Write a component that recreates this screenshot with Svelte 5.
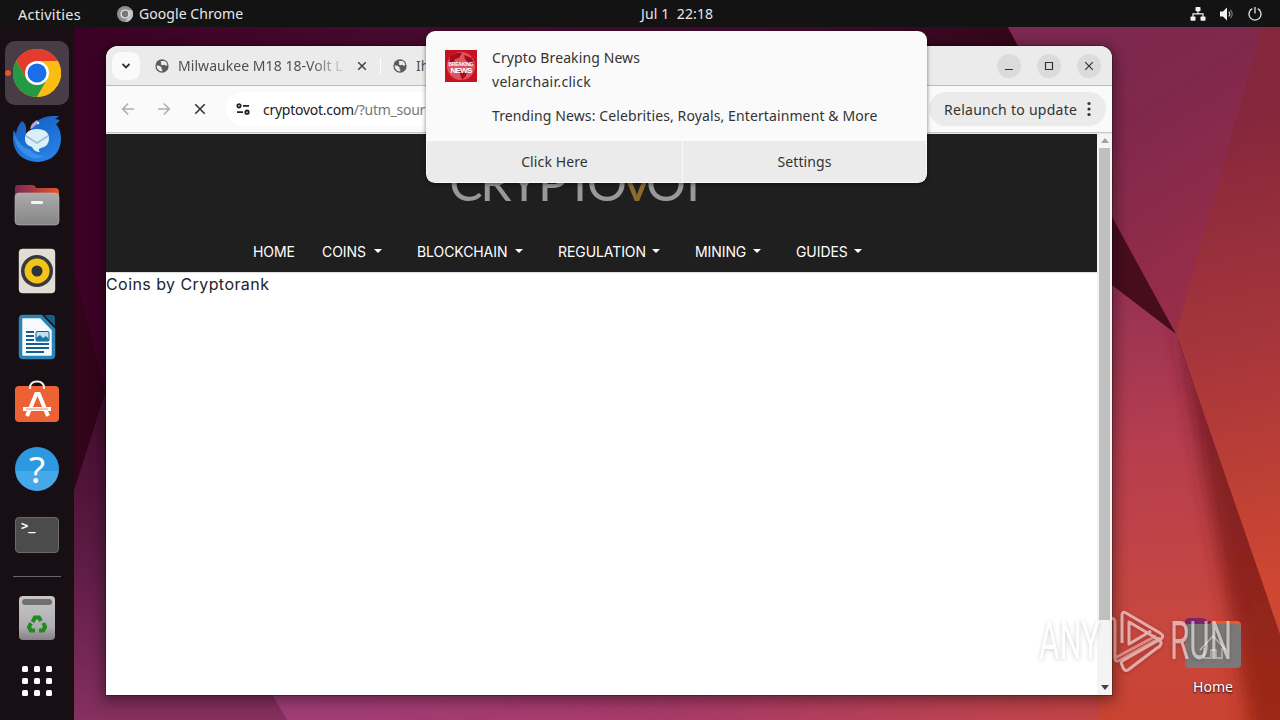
<script lang="ts">
  type NavItem = { label: string; width: number; menu: boolean };

  const navItems: NavItem[] = [
    { label: 'HOME', width: 42, menu: false },
    { label: 'COINS', width: 46, menu: true },
    { label: 'BLOCKCHAIN', width: 92, menu: true },
    { label: 'REGULATION', width: 88, menu: true },
    { label: 'MINING', width: 52, menu: true },
    { label: 'GUIDES', width: 52, menu: true },
  ];

  const gridDots = [0, 1, 2, 3, 4, 5, 6, 7, 8];

  const logoLetters = [
    { char: 'C', x: 466 },
    { char: 'R', x: 496 },
    { char: 'Y', x: 524 },
    { char: 'P', x: 553 },
    { char: 'T', x: 580 },
    { char: 'O', x: 607 },
    { char: 'V', x: 637 },
    { char: 'O', x: 666 },
    { char: 'T', x: 693 },
  ];
</script>

{#snippet globe()}
  <svg class="globe" viewBox="0 0 16 16">
    <circle cx="8" cy="8" r="7.6" fill="#5b5b5b" />
    <path
      d="M2 7.2 5.6 8l2 1.7-.3 1.6 1.3 1-.5 2A6.3 6.3 0 0 1 2 7.2ZM6.4 2.2l3 .2 1.2-.3a6.3 6.3 0 0 1 3.6 5.1l-1.9.4-1.7-1.1-2.4.5L6.3 5.7l1-1Z"
      fill="#ebebeb"
    />
  </svg>
{/snippet}

<div class="desktop">
  <svg class="wallpaper" viewBox="0 0 1280 720">
    <defs>
      <linearGradient id="base" x1="0" y1="0" x2="1" y2="0">
        <stop offset="0" stop-color="#380022" />
        <stop offset=".3" stop-color="#48092f" />
        <stop offset=".6" stop-color="#430b2f" />
        <stop offset=".8" stop-color="#330719" />
      </linearGradient>
      <linearGradient id="left" x1="0" y1="393" x2="0" y2="720" gradientUnits="userSpaceOnUse">
        <stop offset="0" stop-color="#420c2c" />
        <stop offset=".5" stop-color="#5c1b43" />
        <stop offset="1" stop-color="#85305f" />
      </linearGradient>
      <linearGradient id="floor" x1="272" y1="0" x2="1280" y2="0" gradientUnits="userSpaceOnUse">
        <stop offset="0" stop-color="#a03c78" />
        <stop offset=".4" stop-color="#a83a68" />
        <stop offset=".7" stop-color="#bc4250" />
        <stop offset="1" stop-color="#c8442e" />
      </linearGradient>
      <linearGradient id="plum" x1="1010" y1="30" x2="1200" y2="330" gradientUnits="userSpaceOnUse">
        <stop offset="0" stop-color="#7c2852" />
        <stop offset=".4" stop-color="#80284c" />
        <stop offset="1" stop-color="#9b2e48" />
      </linearGradient>
      <linearGradient id="rust" x1="1190" y1="120" x2="1290" y2="580" gradientUnits="userSpaceOnUse">
        <stop offset="0" stop-color="#84263c" />
        <stop offset=".5" stop-color="#a7363b" />
        <stop offset="1" stop-color="#cf4731" />
      </linearGradient>
      <linearGradient id="rose" x1="1130" y1="290" x2="1160" y2="720" gradientUnits="userSpaceOnUse">
        <stop offset="0" stop-color="#963253" />
        <stop offset=".35" stop-color="#b53d4f" />
        <stop offset=".75" stop-color="#c74740" />
        <stop offset="1" stop-color="#c94331" />
      </linearGradient>
      <linearGradient id="wedge" x1="0" y1="334" x2="0" y2="720" gradientUnits="userSpaceOnUse">
        <stop offset="0" stop-color="#741c2c" />
        <stop offset="1" stop-color="#9e2816" />
      </linearGradient>
      <filter id="soft" x="-50%" y="-20%" width="200%" height="140%">
        <feGaussianBlur stdDeviation="9" />
      </filter>
      <clipPath id="roseClip"><path d="M1100 276 1176 334 1280 634V720H1100Z" /></clipPath>
    </defs>
    <rect width="1280" height="720" fill="url(#base)" />
    <path d="M74 490 105 393 140 500 300 720H74Z" fill="url(#left)" />
    <path d="M105 393 74 270V490Z" fill="#310419" />
    <path d="M160 500 287 720H1280V600Z" fill="url(#floor)" />
    <path d="M1004 20H1280V340H1176Z" fill="url(#plum)" />
    <path d="M1262 27 1176 334 1280 634V27Z" fill="url(#rust)" />
    <path d="M1070 140 1176 334 1070 262Z" fill="#470d1d" />
    <g clip-path="url(#roseClip)">
      <path d="M1100 262 1176 334 1280 634V720H1100Z" fill="url(#rose)" />
      <path d="M1174 310 1310 634V760H1256Z" fill="url(#wedge)" filter="url(#soft)" />
    </g>
  </svg>

  <header class="topBar">
    <div class="topLeft">
      <span class="activities">Activities</span>
      <svg class="smallChrome" viewBox="0 0 16 16">
        <circle cx="8" cy="8" r="8" fill="#8e8e8e" />
        <path d="M8 4h7A8 8 0 0 1 8 16l4-6Z" fill="#c4c4c4" />
        <circle cx="8" cy="8" r="4" fill="#777" stroke="#eee" stroke-width="1.2" />
      </svg>
      <span class="appName">Google Chrome</span>
    </div>
    <span class="clock">Jul 1&nbsp; 22:18</span>
    <div class="topRight">
      <svg width="16" height="14" viewBox="0 0 16 14" fill="#f2f2f2">
        <rect x="5.5" y="0" width="5" height="4.3" rx=".8" />
        <rect x=".5" y="9.5" width="5" height="4.3" rx=".8" />
        <rect x="10.5" y="9.5" width="5" height="4.3" rx=".8" />
        <path d="M7.4 4h1.2v2.3h5V10h-1.2V7.5H3.6V10H2.4V6.3h5Z" />
      </svg>
      <svg width="16" height="14" viewBox="0 0 16 14" fill="none">
        <path d="M1 4.5h3L8 .5v13l-4-4H1Z" fill="#f2f2f2" />
        <path d="M9.8 4.5q2 2.500 0 5" stroke="#ccc" stroke-width="1.2" />
        <path d="M11.500 2.800q3.400 4.200 0 8.400" stroke="#777" stroke-width="1.2" />
      </svg>
      <svg width="14" height="14" viewBox="0 0 14 14" fill="none" stroke="#e4e4e4" stroke-width="1.3">
        <path d="M4.300 1.700a6 6 0 1 0 5.400 0M7 0v6.500" />
      </svg>
    </div>
  </header>

  <aside class="dock">
    <div class="tile active">
      <svg width="48" height="48" viewBox="0 0 48 48">
        <circle cx="24" cy="24" r="24" fill="#fbbc14" />
        <path d="M3.200 12A24 24 0 0 1 44.800 12H24L13.600 30Z" fill="#e33b2e" />
        <path d="M3.200 12A24 24 0 0 0 24 48L34.400 30 24 24 13.600 30Z" fill="#249a45" />
        <path d="M24 12H44.800A24 24 0 0 1 24 48L34.400 30Z" fill="#fbbc14" />
        <circle cx="24" cy="24" r="12" fill="#fff" />
        <circle cx="24" cy="24" r="9.5" fill="#1a6fe8" />
      </svg>
    </div>
    <div class="tile">
      <svg width="48" height="46" viewBox="0 0 48 46">
        <defs>
          <linearGradient id="bird" x1="0" y1="0" x2=".6" y2="1">
            <stop offset="0" stop-color="#1b5cb8" />
            <stop offset=".5" stop-color="#1a6dd2" />
            <stop offset="1" stop-color="#2a80e4" />
          </linearGradient>
        </defs>
        <path
          d="M9 5q5 3 4 12h4q1-8 7-12 9-6 22-5-2 2-4 3l5 1q-2 3-4 4 5 6 5 15-1 21-23 23Q2 45 0 24q-1-5 1-10l2 4q1-8 6-13Z"
          fill="url(#bird)"
        />
        <path d="M17 13q1-6 7-9 2 2-1 5t-6 4Z" fill="#b6a0d8" />
        <path d="M1 18q1 17 16 23 7 3 15-1-9 0-15-6-9-2-16-16Z" fill="#4aa0f0" opacity=".6" />
        <path d="M12 23q0-10 12-10t12 10q0 7-8 9-4 1-1 4-6 0-8-5-7-2-7-8Z" fill="#dbeffb" />
        <path d="m13 20 11 7 11-7" fill="none" stroke="#9dbfd8" stroke-width="1.6" />
        <circle cx="25" cy="7" r="1.3" fill="#d6e6ff" />
      </svg>
    </div>
    <div class="tile">
      <svg width="46" height="42" viewBox="0 0 46 42">
        <defs>
          <linearGradient id="folderBack"><stop stop-color="#7a2850" /><stop offset="1" stop-color="#e9552c" /></linearGradient>
          <linearGradient id="folderFront" x1="0" y1="0" x2="0" y2="1"><stop stop-color="#ababab" /><stop offset="1" stop-color="#858585" /></linearGradient>
        </defs>
        <path d="M1 22V4q0-3 3-3h14q3 0 4 3h19q4 0 4 4v14Z" fill="url(#folderBack)" />
        <rect x="1" y="9" width="44" height="32" rx="4" fill="url(#folderFront)" stroke="#b9b9b9" stroke-width=".6" />
        <rect x="17" y="17" width="12" height="3" rx="1" fill="#f4f4f4" />
      </svg>
    </div>
    <div class="tile">
      <svg width="38" height="46" viewBox="0 0 38 46">
        <rect x=".8" y=".8" width="36.400" height="44.400" rx="4" fill="#e2ddd4" />
        <circle cx="19" cy="23" r="16" fill="#363a3c" />
        <circle cx="19" cy="23" r="12.5" fill="#f3c319" />
        <circle cx="19" cy="23" r="5.5" fill="#2c3238" />
      </svg>
    </div>
    <div class="tile">
      <svg width="38" height="46" viewBox="0 0 38 46">
        <path d="M5 2.500h18l12.500 13V41q0 2.500-2.500 2.500H5Q2.500 43.500 2.500 41V5Q2.500 2.500 5 2.500Z" fill="#f6fafc" stroke="#2c84b5" stroke-width="3.500" />
        <path d="M26 1h8q3 0 3 3v8Z" fill="#195c85" />
        <path d="M8 18h8M8 22h8M8 26h8M8 30h23M8 34h23M8 38h18" stroke="#14608c" stroke-width="2" />
        <rect x="18" y="17.500" width="13" height="9.500" rx="1" fill="#bfe0f5" stroke="#14608c" />
        <path d="M18 27v-3l4-3 3 3 3-2 3 3v2Z" fill="#1b76a8" />
      </svg>
    </div>
    <div class="tile">
      <svg width="46" height="48" viewBox="0 0 46 48">
        <rect x="1" y="7" width="44" height="36" rx="4" fill="#ec6234" />
        <path d="M16 10V9q0-6.500 7-6.500T30 9v1" fill="none" stroke="#f7efe9" stroke-width="2" />
        <path d="m13 37 9.200-22h2.600L34 37" fill="none" stroke="#fff" stroke-width="4" />
        <path d="M9 30h28" stroke="#fff" stroke-width="4" />
        <path d="M12 30h22" stroke="#ec8a68" stroke-width="1" />
      </svg>
    </div>
    <div class="tile">
      <div class="help">?</div>
    </div>
    <div class="tile">
      <div class="terminal">&gt;_</div>
    </div>
    <div class="separator"></div>
    <div class="tile">
      <div class="trash">
        <div class="trashSlot"></div>
        <svg width="20" height="18" viewBox="0 0 20 18" fill="none" stroke="#1e8c1e" stroke-width="4">
          <path d="M5.500 7 8 2.500h4L14 6M16.300 8l1.800 4-2 3.500h-4M8 15.500H3.800L2 12l2-3.800" />
        </svg>
      </div>
    </div>
    <div class="appGrid">
      {#each gridDots as dot (dot)}
        <span></span>
      {/each}
    </div>
  </aside>

  <div class="homeShortcut">
    <svg width="56" height="50" viewBox="0 0 56 50">
      <path d="M0 20V4q0-4 4-4h12q4 0 6 3h30q4 0 4 4v13Z" fill="#e95a2a" />
      <path d="M0 20V4q0-4 4-4h12q4 0 6 3h5l-7 9Z" fill="#7b2667" />
      <rect x="0" y="6" width="56" height="44" rx="4" fill="#7b7877" />
      <path d="M15 32 28 18l13 14M19 30v10h7v-8h5v8h6V30" fill="none" stroke="#c4c0bf" stroke-width="1.4" />
    </svg>
    <span>Home</span>
  </div>

  <main class="window">
    <div class="tabStrip">
      <div class="tabSearch">
        <svg width="10" height="8" viewBox="0 0 10 8"><path d="m1.500 2 3.500 3.500L8.500 2" fill="none" stroke="#333" stroke-width="1.8" /></svg>
      </div>
      <div class="tab">
        {@render globe()}
        <span class="tabTitle fading">Milwaukee M18 18-Volt L</span>
        <svg width="10" height="10" viewBox="0 0 10 10"><path d="m1.200 1.200 7.600 7.600M8.800 1.200 1.200 8.800" stroke="#444" stroke-width="1.6" /></svg>
      </div>
      <div class="tabDivider"></div>
      <div class="tab second">
        {@render globe()}
        <span class="tabTitle">Ih</span>
      </div>
      <div class="windowControls">
        <button aria-label="Minimize"><svg viewBox="0 0 10 10"><path d="M1 8.500h8" /></svg></button>
        <button aria-label="Maximize"><svg viewBox="0 0 10 10"><path d="M1.500 1.500h7v7h-7Z" /></svg></button>
        <button aria-label="Close"><svg viewBox="0 0 10 10"><path d="m1.200 1.200 7.600 7.600M8.800 1.200 1.200 8.800" /></svg></button>
      </div>
    </div>

    <div class="toolbar">
      <div class="navButtons">
        <svg class="faded" viewBox="0 0 14 14"><path d="M13 7H2M7.200 1.500 1.700 7l5.500 5.500" /></svg>
        <svg class="faded" viewBox="0 0 14 14"><path d="M1 7h11M6.800 1.500 12.300 7l-5.500 5.500" /></svg>
        <svg viewBox="0 0 14 14"><path d="m2.300 2.300 9.400 9.400M11.700 2.300 2.300 11.700" /></svg>
      </div>
      <div class="addressBar">
        <svg width="14" height="12" viewBox="0 0 14 12" fill="none" stroke="#222" stroke-width="1.8">
          <circle cx="3" cy="2.800" r="1.700" />
          <path d="M7 2.800h6M1 9.200h6" />
          <circle cx="11" cy="9.200" r="1.700" />
        </svg>
        <span class="url"><b>cryptovot.com</b>/?utm_sour</span>
      </div>
      <div class="relaunch">
        <span>Relaunch to update</span>
        <svg width="4" height="16" viewBox="0 0 4 16" fill="#333">
          <circle cx="2" cy="2.500" r="1.600" />
          <circle cx="2" cy="8" r="1.600" />
          <circle cx="2" cy="13.500" r="1.600" />
        </svg>
      </div>
    </div>

    <div class="viewport">
      <div class="page">
        <div class="siteHeader">
          <svg class="siteLogo" viewBox="440 155 270 60">
            {#each logoLetters as letter}
              <text class:gold={letter.char === 'V'} x={letter.x} y="201">{letter.char}</text>
            {/each}
          </svg>
          <nav class="siteNav">
            {#each navItems as item (item.label)}
              <div class="navItem" class:hasMenu={item.menu}>
                <span style="width: {item.width}px">{item.label}</span>
                {#if item.menu}<i></i>{/if}
              </div>
            {/each}
          </nav>
        </div>
        <p class="coins">Coins by Cryptorank</p>
      </div>
      <div class="scrollbar">
        <div class="arrow up"></div>
        <div class="thumb"></div>
        <div class="arrow down"></div>
      </div>
    </div>
  </main>

  <section class="notification">
    <div class="notificationBody">
      <svg width="32" height="32" viewBox="0 0 32 32">
        <rect width="32" height="32" fill="#c9121f" />
        <circle cx="16" cy="16" r="14" fill="#dc5560" />
        <path d="M5 7q5-5 12-4l-3 5-4 1-1 4-5 1ZM19 5l8 3 2 6-6-1-3-4ZM14 21h8l-1 5-4 4Z" fill="#a80c18" />
        <text class="badgeSmall" x="16" y="15.500" textLength="25">BREAKING</text>
        <text class="badgeBig" x="16.500" y="22.500" textLength="22">NEWS</text>
      </svg>
      <div class="notificationText">
        <span class="title">Crypto Breaking News</span>
        <span class="source">velarchair.click</span>
        <span class="message">Trending News: Celebrities, Royals, Entertainment &amp; More</span>
      </div>
    </div>
    <div class="notificationActions">
      <button>Click Here</button>
      <button>Settings</button>
    </div>
  </section>

  <svg class="watermark" viewBox="0 0 220 90">
    <text x="3" y="53" textLength="61" lengthAdjust="spacingAndGlyphs">ANY</text>
    <text x="134" y="53" textLength="62" lengthAdjust="spacingAndGlyphs">RUN</text>
    <g class="mark">
      <path d="M86 37V9q0-4 4-2l34 20q5 3 1 6-2 1-5-1L93 16v22l22-13" />
      <path d="M74 12q5 0 5 4v36l41-22M79 52q0 5 5 2l40-22" opacity=".7" />
      <path d="M86 59q-2-3 2-5l33-19q5-1 4 3-1 3-4 4L92 64q-4 2-6-5Z" />
    </g>
  </svg>
</div>

<style>
  :global(body) {
    overflow: hidden;
  }

  .desktop {
    position: relative;
    display: grid;
    grid-template: 27px 693px / 74px 1fr;
    width: 1280px;
    height: 720px;
    overflow: hidden;

    font-family: 'Noto Sans', 'Open Sans', sans-serif;
    font-size: 14px;
    color: #333;
  }

  .desktop svg {
    flex: none;
  }

  .wallpaper {
    position: absolute;
    inset: 0;
  }

  .topBar {
    position: relative;
    grid-column: 1 / -1;
    display: grid;
    grid-template-columns: 641px auto 1fr;
    align-items: center;

    background-color: #131313;
    color: #e8e8e8;
  }

  .topLeft {
    display: flex;
    align-items: center;
    padding-left: 18px;
  }

  .activities {
    width: 99px;
    font-size: 14.5px;
    letter-spacing: 0.25px;
  }

  .smallChrome {
    width: 16px;
    height: 16px;
    margin-right: 6px;
  }

  .appName {
    letter-spacing: 0.06px;
  }

  .clock {
    letter-spacing: 0.12px;
  }

  .topRight {
    display: flex;
    justify-content: flex-end;
    align-items: center;
    gap: 13px;
    padding-right: 18px;
  }

  .dock {
    position: relative;
    display: flex;
    flex-direction: column;
    align-items: center;
    gap: 2px;
    padding-top: 14px;

    background-color: rgba(22, 16, 20, 0.93);
  }

  .tile {
    display: flex;
    flex: none;
    align-items: center;
    justify-content: center;
    width: 64px;
    height: 64px;
    border-radius: 10px;
  }

  .tile.active {
    position: relative;
    background-color: #483c46;
  }

  .tile.active::before {
    content: '';
    position: absolute;
    left: 0;
    width: 6px;
    height: 6px;
    border-radius: 50%;
    background-color: #e95420;
  }

  .help {
    width: 44px;
    height: 44px;
    border-radius: 50%;
    background: linear-gradient(#2c98e0 54%, #45a8e8 54%);

    color: #fff;
    font-size: 37px;
    line-height: 43px;
    text-align: center;
  }

  .terminal {
    box-sizing: border-box;
    width: 44px;
    height: 36px;
    padding: 0 5px;
    border: 1px solid #6a6a6a;
    border-radius: 4px;
    background-color: #4b4b4b;

    color: #fff;
    font: bold 12px/16px 'DejaVu Sans Mono', monospace;
  }

  .separator {
    flex: none;
    width: 48px;
    height: 1px;
    margin: 7px 0;
    background-color: #6e666c;
  }

  .trash {
    display: flex;
    flex-direction: column;
    align-items: center;
    gap: 10px;
    width: 36px;
    height: 44px;
    border-radius: 4px;
    background: linear-gradient(#c7c7c7, #b0adb0 70%, #858085);
  }

  .trashSlot {
    width: 30px;
    height: 6px;
    margin-top: 3px;
    border-radius: 3px;
    background-color: #707070;
  }

  .appGrid {
    display: grid;
    grid-template-columns: repeat(3, 6px);
    gap: 6px;
    margin-top: 14px;
  }

  .appGrid span {
    height: 6px;
    border-radius: 1.5px;
    background-color: #fff;
  }

  .homeShortcut {
    position: absolute;
    left: 1173px;
    top: 618px;
    display: flex;
    flex-direction: column;
    align-items: center;
    gap: 9px;
    width: 80px;

    color: #fff;
    text-shadow: 0 1px 2px #000;
  }

  .window {
    position: absolute;
    left: 106px;
    top: 46px;
    display: flex;
    flex-direction: column;
    width: 1006px;
    height: 649px;
    border-radius: 12px 12px 0 0;
    overflow: hidden;

    background-color: #fff;
    box-shadow: 0 3px 14px 3px rgba(0, 0, 0, 0.4), 0 0 0 1px rgba(0, 0, 0, 0.25);
  }

  .tabStrip {
    box-sizing: border-box;
    display: flex;
    align-items: center;
    height: 40px;
    padding: 0 11px 0 6px;
    border-bottom: 1px solid #bababa;
    background-color: #ebebeb;
  }

  .tabSearch {
    display: flex;
    align-items: center;
    justify-content: center;
    width: 28px;
    height: 28px;
    border-radius: 9px;
    background-color: #fafafa;
  }

  .tab {
    display: flex;
    align-items: center;
    width: 212px;
    margin-left: 15px;
  }

  .tab.second {
    margin-left: 12px;
  }

  .tabDivider {
    width: 1px;
    height: 16px;
    margin-left: 13px;
    background-color: #fff;
  }

  .globe {
    width: 14px;
    height: 14px;
    margin-right: 9px;
  }

  .tabTitle {
    width: 166px;
    margin-right: 13px;
    white-space: nowrap;

    color: #505050;
    letter-spacing: 0.05px;
  }

  .fading {
    mask-image: linear-gradient(90deg, #000 80%, rgba(0, 0, 0, 0.1));
  }

  .windowControls {
    display: flex;
    gap: 16px;
    margin-left: auto;
  }

  .windowControls button {
    display: flex;
    align-items: center;
    justify-content: center;
    width: 24px;
    height: 24px;
    padding: 0;
    border: 0;
    border-radius: 50%;
    background-color: #dbdbdb;
  }

  .windowControls svg {
    width: 10px;
    height: 10px;
    fill: none;
    stroke: #333;
    stroke-width: 1.2;
  }

  .toolbar {
    box-sizing: border-box;
    display: flex;
    align-items: center;
    height: 47px;
    padding: 0 6px 0 15px;
    border-bottom: 1px solid #c6c6c6;
    background-color: #fafafa;
  }

  .navButtons {
    display: flex;
    gap: 22px;
  }

  .navButtons svg {
    width: 14px;
    height: 14px;
    fill: none;
    stroke: #333;
    stroke-width: 1.6;
  }

  .navButtons .faded {
    stroke: #b0b0b0;
  }

  .addressBar {
    display: flex;
    flex: 1;
    align-items: center;
    height: 34px;
    margin: 0 4px 0 19px;
    padding-left: 10px;
    border-radius: 17px;
    background-color: #fff;
  }

  .url {
    margin-left: 13px;
    color: #777;
    letter-spacing: -0.26px;
  }

  .url b {
    color: #222;
    font-weight: 400;
  }

  .relaunch {
    box-sizing: border-box;
    display: flex;
    align-items: center;
    justify-content: space-between;
    width: 177px;
    height: 34px;
    padding: 0 15px;
    border-radius: 17px;
    background-color: #ebebeb;
    letter-spacing: 0.28px;
    white-space: nowrap;
  }

  .viewport {
    display: flex;
    flex: 1;
    border-top: 1px solid #e8e8e8;
  }

  .page {
    flex: 1;
  }

  .siteHeader {
    display: flex;
    flex-direction: column;
    justify-content: space-between;
    height: 138px;
    border-bottom: 1px solid #ddd;
    background-color: #1f1f1f;
  }

  .siteLogo {
    width: 270px;
    height: 60px;
    margin: 21px 0 0 334px;
  }

  .siteLogo text {
    font-family: Lato, sans-serif;
    font-size: 50px;
    text-anchor: middle;
    fill: #999;
  }

  .siteLogo .gold {
    fill: #8c6c2e;
  }

  .siteNav {
    display: flex;
    align-items: center;
    height: 41px;
    padding-left: 147px;

    color: #fff;
    font-family: Inter, sans-serif;
    font-size: 14px;
    letter-spacing: -0.08px;
  }

  .navItem {
    display: flex;
    align-items: center;
    margin-right: 27px;
  }

  .navItem.hasMenu {
    margin-right: 35px;
  }

  .navItem span {
    flex: none;
  }

  .navItem i {
    margin: 0 0 1px 6px;
    border: 4px solid transparent;
    border-top-color: #fff;
    border-bottom: 0;
  }

  .coins {
    margin: 0;

    color: #212529;
    font-family: Inter, sans-serif;
    font-size: 16px;
    letter-spacing: 0.43px;
    line-height: 22px;
  }

  .scrollbar {
    box-sizing: border-box;
    display: flex;
    flex-direction: column;
    align-items: center;
    width: 15px;
    padding: 4px 0 5px;
    background-color: #f4f4f4;
  }

  .thumb {
    width: 11px;
    height: 472px;
    margin-top: 5px;
    background-color: #c0c0c0;
  }

  .arrow {
    border: 4px solid transparent;
  }

  .arrow.up {
    border-top: 0;
    border-bottom: 5px solid #a0a0a0;
  }

  .arrow.down {
    margin-top: auto;
    border-bottom: 0;
    border-top: 5px solid #444;
  }

  .notification {
    position: absolute;
    left: 426px;
    top: 31px;
    display: flex;
    flex-direction: column;
    box-sizing: border-box;
    width: 501px;
    height: 152px;
    padding: 0 1px 1px;
    border-radius: 9px;
    overflow: hidden;

    background-color: #fafafa;
    box-shadow: 0 1px 4px rgba(0, 0, 0, 0.5);
    letter-spacing: 0.11px;
  }

  .notificationBody {
    display: flex;
    flex: 1;
    align-items: flex-start;
    gap: 15px;
    padding: 19px 18px 0;
  }

  .badgeSmall,
  .badgeBig {
    fill: #fff;
    font-family: 'Liberation Sans', sans-serif;
    font-size: 5px;
    font-weight: 700;
    text-anchor: middle;
  }

  .badgeBig {
    font-size: 8px;
  }

  .notificationText {
    display: flex;
    flex-direction: column;
    margin-top: -4px;
    line-height: 24px;
    white-space: nowrap;
  }

  .source {
    letter-spacing: 0.3px;
  }

  .message {
    margin-top: 10px;
  }

  .notificationActions {
    display: grid;
    grid-template-columns: 255px 243px;
    gap: 1px;
    height: 41px;
  }

  .notificationActions button {
    padding: 0;
    border: 0;
    background-color: #ebebeb;
    color: #333;
    font: inherit;
    letter-spacing: inherit;
  }

  .watermark {
    position: absolute;
    left: 1036px;
    top: 606px;
    width: 220px;
    height: 90px;
    opacity: 0.55;
    filter: drop-shadow(0 1px 2px rgba(0, 0, 0, 0.35));
  }

  .watermark text {
    fill: #fff;
    font-family: Roboto, sans-serif;
    font-size: 53px;
    font-weight: 400;
  }

  .mark {
    fill: none;
    stroke: #fff;
    stroke-width: 3;
    stroke-linejoin: round;
  }
</style>
